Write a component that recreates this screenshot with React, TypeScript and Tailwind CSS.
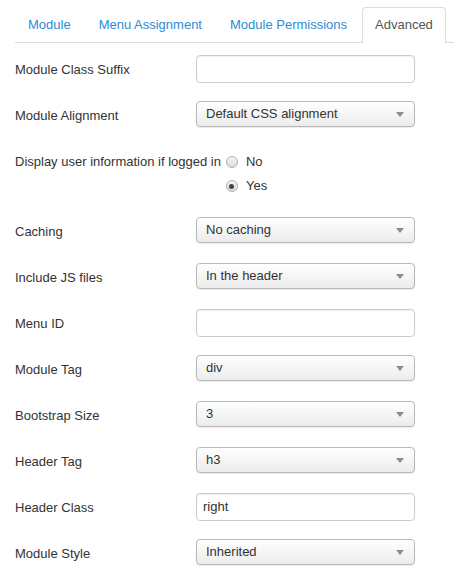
import React from "react";

const font = { fontFamily: '"Liberation Sans", Arial, sans-serif' };

function Select({ value }: { value: string }) {
  return (
    <div className="relative flex h-[26px] w-[219px] items-center rounded-[4px] border border-[#b8b8b8] bg-gradient-to-b from-white to-[#ececec] pl-[9px] text-[13px] text-[#333] shadow-[0_1px_1px_rgba(0,0,0,0.08)]">
      <span>{value}</span>
      <svg className="absolute right-[10px] top-[10px]" width="8" height="5" viewBox="0 0 8 5">
        <path d="M0 0 L8 0 L4 5 Z" fill="#8c8c8c" />
      </svg>
    </div>
  );
}

function TextInput({ value }: { value?: string }) {
  return (
    <div className="flex h-[28px] w-[219px] items-center rounded-[4px] border border-[#cccccc] bg-white pl-[6px] text-[13px] text-[#333] shadow-[inset_0_1px_1px_rgba(0,0,0,0.06)]">
      {value}
    </div>
  );
}

function Radio({ checked }: { checked?: boolean }) {
  return (
    <span className="flex h-[12px] w-[12px] items-center justify-center rounded-full border border-[#b0b0b0] bg-gradient-to-b from-[#f4f4f4] to-[#dcdcdc]">
      {checked && <span className="h-[5px] w-[5px] rounded-full bg-[#444]" />}
    </span>
  );
}

function Row({ label, children }: { label: string; children: React.ReactNode }) {
  return (
    <div className="flex h-[28px] items-start">
      <div className="flex h-[28px] w-[181px] items-center pt-[2px] text-[13px] text-[#333]">{label}</div>
      {children}
    </div>
  );
}

export default function App() {
  const tabs = ["Module", "Menu Assignment", "Module Permissions"];
  return (
    <div className="h-[574px] w-[454px] bg-white" style={font}>
      <div className="pl-[15px] pt-[7px]">
        <ul className="flex h-[36px] items-end border-b border-[#dddddd]">
          {tabs.map((t) => (
            <li key={t} className="mr-[2px] flex h-[35px] items-center px-[13px] text-[13px] text-[#2f8bd5]">
              {t}
            </li>
          ))}
          <li className="-mb-px flex h-[36px] items-center rounded-t-[4px] border border-b-0 border-[#dddddd] bg-white px-[12px] pb-px text-[13px] text-[#555]">
            Advanced
          </li>
        </ul>
      </div>
      <div className="flex flex-col gap-[18px] pl-[15px] pt-[12px]">
        <Row label="Module Class Suffix">
          <TextInput />
        </Row>
        <Row label="Module Alignment">
          <Select value="Default CSS alignment" />
        </Row>
        <div className="flex h-[52px] items-start text-[13px] text-[#333]">
          <div className="flex h-[28px] items-center pt-[2px]">Display user information if logged in</div>
          <div className="ml-[5px] flex flex-col">
            <div className="flex h-[28px] items-center gap-[8px] pt-[2px]">
              <Radio />
              <span>No</span>
            </div>
            <div className="flex h-[20px] items-center gap-[8px] pt-[2px]">
              <Radio checked />
              <span>Yes</span>
            </div>
          </div>
        </div>
        <Row label="Caching">
          <Select value="No caching" />
        </Row>
        <Row label="Include JS files">
          <Select value="In the header" />
        </Row>
        <Row label="Menu ID">
          <TextInput />
        </Row>
        <Row label="Module Tag">
          <Select value="div" />
        </Row>
        <Row label="Bootstrap Size">
          <Select value="3" />
        </Row>
        <Row label="Header Tag">
          <Select value="h3" />
        </Row>
        <Row label="Header Class">
          <TextInput value="right" />
        </Row>
        <Row label="Module Style">
          <Select value="Inherited" />
        </Row>
      </div>
    </div>
  );
}
